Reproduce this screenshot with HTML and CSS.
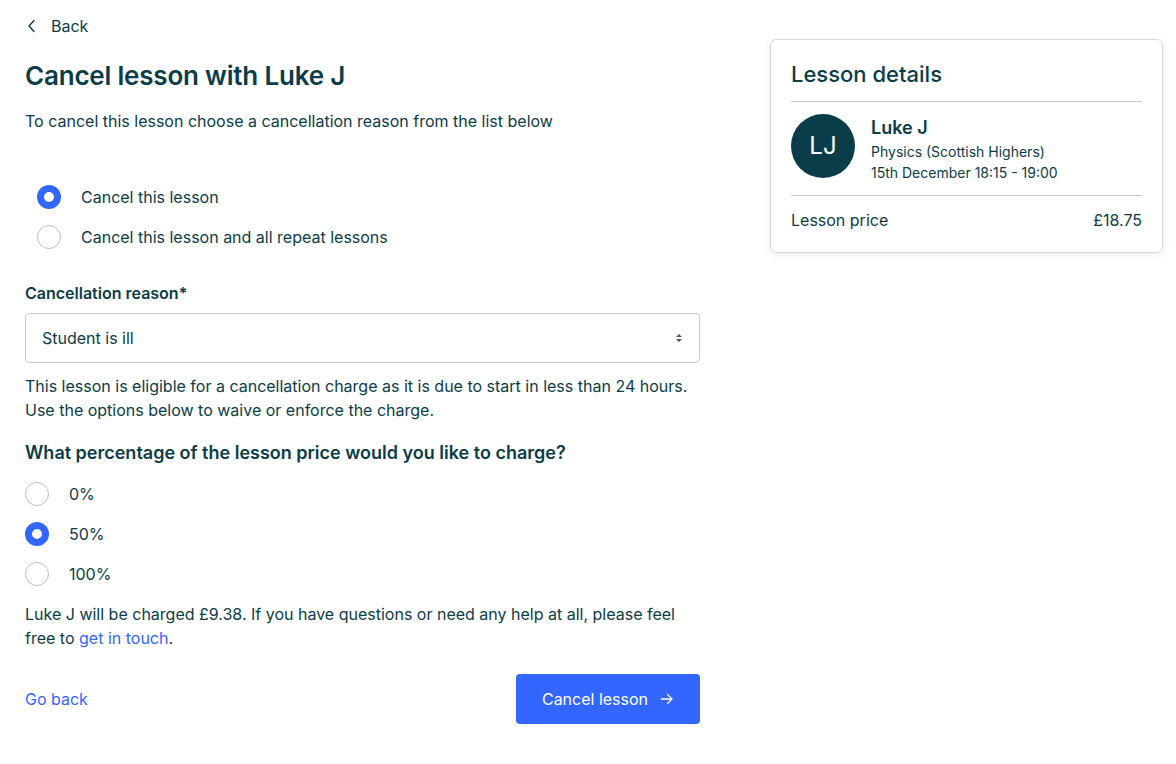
FILE: index.html
```html
<!DOCTYPE html>
<html lang="en">
<head>
<meta charset="utf-8">
<title>Cancel lesson</title>
<link rel="stylesheet" href="styles.css">
</head>
<body>
<div class="page">
  <main class="main">
    <a class="back" href="#">
      <svg width="10" height="14" viewBox="0 0 10 14"><path d="M7 1.5 L2 7 L7 12.5" fill="none" stroke="#0b3c49" stroke-width="1.4" stroke-linecap="round" stroke-linejoin="round"/></svg>
      <span>Back</span>
    </a>
    <h1 class="title">Cancel lesson with Luke J</h1>
    <p class="intro">To cancel this lesson choose a cancellation reason from the list below</p>

    <div class="options options-scope">
      <label class="radio-row"><span class="radio checked"></span><span>Cancel this lesson</span></label>
      <label class="radio-row"><span class="radio"></span><span>Cancel this lesson and all repeat lessons</span></label>
    </div>

    <div class="field-label">Cancellation reason*</div>
    <div class="select">
      <span>Student is ill</span>
      <svg width="8" height="12" viewBox="0 0 8 12"><path d="M1 5 L4 2 L7 5 Z M1 7 L4 10 L7 7 Z" fill="#555"/></svg>
    </div>
    <p class="note">This lesson is eligible for a cancellation charge as it is due to start in less than 24 hours. Use the options below to waive or enforce the charge.</p>

    <h2 class="question">What percentage of the lesson price would you like to charge?</h2>
    <div class="options options-pct">
      <label class="radio-row"><span class="radio"></span><span>0%</span></label>
      <label class="radio-row"><span class="radio checked"></span><span>50%</span></label>
      <label class="radio-row"><span class="radio"></span><span>100%</span></label>
    </div>
    <p class="charge">Luke J will be charged £9.38. If you have questions or need any help at all, please feel free to <a href="#">get in touch</a>.</p>

    <div class="actions">
      <a class="go-back" href="#">Go back</a>
      <button class="btn">Cancel lesson
        <svg width="14" height="14" viewBox="0 0 14 14"><path d="M1.5 7 H12 M7.5 2.5 L12 7 L7.5 11.5" fill="none" stroke="#fff" stroke-width="1.4" stroke-linecap="round" stroke-linejoin="round"/></svg>
      </button>
    </div>
  </main>

  <aside class="card">
    <h3 class="card-title">Lesson details</h3>
    <div class="tutor">
      <div class="avatar">LJ</div>
      <div class="tutor-info">
        <div class="tutor-name">Luke J</div>
        <div class="tutor-sub">Physics (Scottish Highers)</div>
        <div class="tutor-sub">15th December 18:15 - 19:00</div>
      </div>
    </div>
    <div class="price-row"><span>Lesson price</span><span>£18.75</span></div>
  </aside>
</div>
</body>
</html>
```

FILE: styles.css
```css
* { box-sizing: border-box; }
html, body { margin: 0; padding: 0; background: #fff; }
body {
  font-family: Inter, "Noto Sans", sans-serif;
  color: #0b3c49;
  font-size: 16px;
  line-height: 24px;
}
.page {
  display: flex;
  align-items: flex-start;
  padding: 0 14px 0 25px;
  gap: 70px;
}
.main {
  width: 675px;
  flex: none;
  padding-top: 14px;
}
.back {
  display: inline-flex;
  align-items: center;
  gap: 14px;
  color: #0b3c49;
  text-decoration: none;
  padding-left: 2px;
  height: 24px;
}
.title {
  margin: 20px 0 0;
  font-size: 26px;
  line-height: 34px;
  font-weight: 600;
  letter-spacing: -0.2px;
}
.intro {
  margin: 16px 0 0;
}
.options-scope {
  margin-top: 44px;
  padding-left: 12px;
}
.radio-row {
  display: flex;
  align-items: center;
  gap: 20px;
  height: 40px;
}
.radio {
  width: 24px;
  height: 24px;
  border-radius: 50%;
  border: 1px solid #b9bec3;
  background: #fff;
  flex: none;
}
.radio.checked {
  border: 7px solid #3366ff;
  background: #fff;
}
.field-label {
  margin-top: 24px;
  font-weight: 600;
}
.select {
  margin-top: 8px;
  height: 50px;
  border: 1px solid #c9cccf;
  border-radius: 4px;
  display: flex;
  align-items: center;
  justify-content: space-between;
  padding: 0 16px 0 16px;
}
.note {
  margin: 11px 0 0;
}
.question {
  margin: 18px 0 0;
  font-size: 18px;
  line-height: 26px;
  font-weight: 600;
}
.options-pct {
  margin-top: 8px;
}
.charge {
  margin: 8px 0 0;
}
.charge a { color: #3366ff; text-decoration: none; }
.actions {
  margin-top: 24px;
  display: flex;
  align-items: center;
  justify-content: space-between;
}
.go-back { color: #3366ff; text-decoration: none; }
.btn {
  font: inherit;
  color: #fff;
  background: #3366ff;
  border: 0;
  border-radius: 4px;
  height: 50px;
  width: 184px;
  display: flex;
  align-items: center;
  justify-content: center;
  gap: 12px;
}
.card {
  margin-top: 39px;
  width: 393px;
  flex: none;
  border: 1px solid #d6d8da;
  border-radius: 6px;
  box-shadow: 0 2px 8px rgba(0,0,0,0.08);
  padding: 20px 20px 20px;
}
.card-title {
  margin: 0;
  font-size: 22px;
  line-height: 28px;
  font-weight: 500;
  padding-bottom: 13px;
  border-bottom: 1px solid #c8cbce;
}
.tutor {
  display: flex;
  gap: 16px;
  padding: 12px 0 12px;
  border-bottom: 1px solid #c8cbce;
}
.avatar {
  width: 64px;
  height: 64px;
  border-radius: 50%;
  background: #0b3c49;
  color: #fff;
  display: flex;
  align-items: center;
  justify-content: center;
  font-size: 24px;
  flex: none;
}
.tutor-info { padding-top: 1px; }
.tutor-name {
  font-weight: 600;
  font-size: 18px;
  line-height: 26px;
}
.tutor-sub {
  font-size: 14px;
  line-height: 21px;
}
.price-row {
  display: flex;
  justify-content: space-between;
  padding-top: 12px;
}
```
